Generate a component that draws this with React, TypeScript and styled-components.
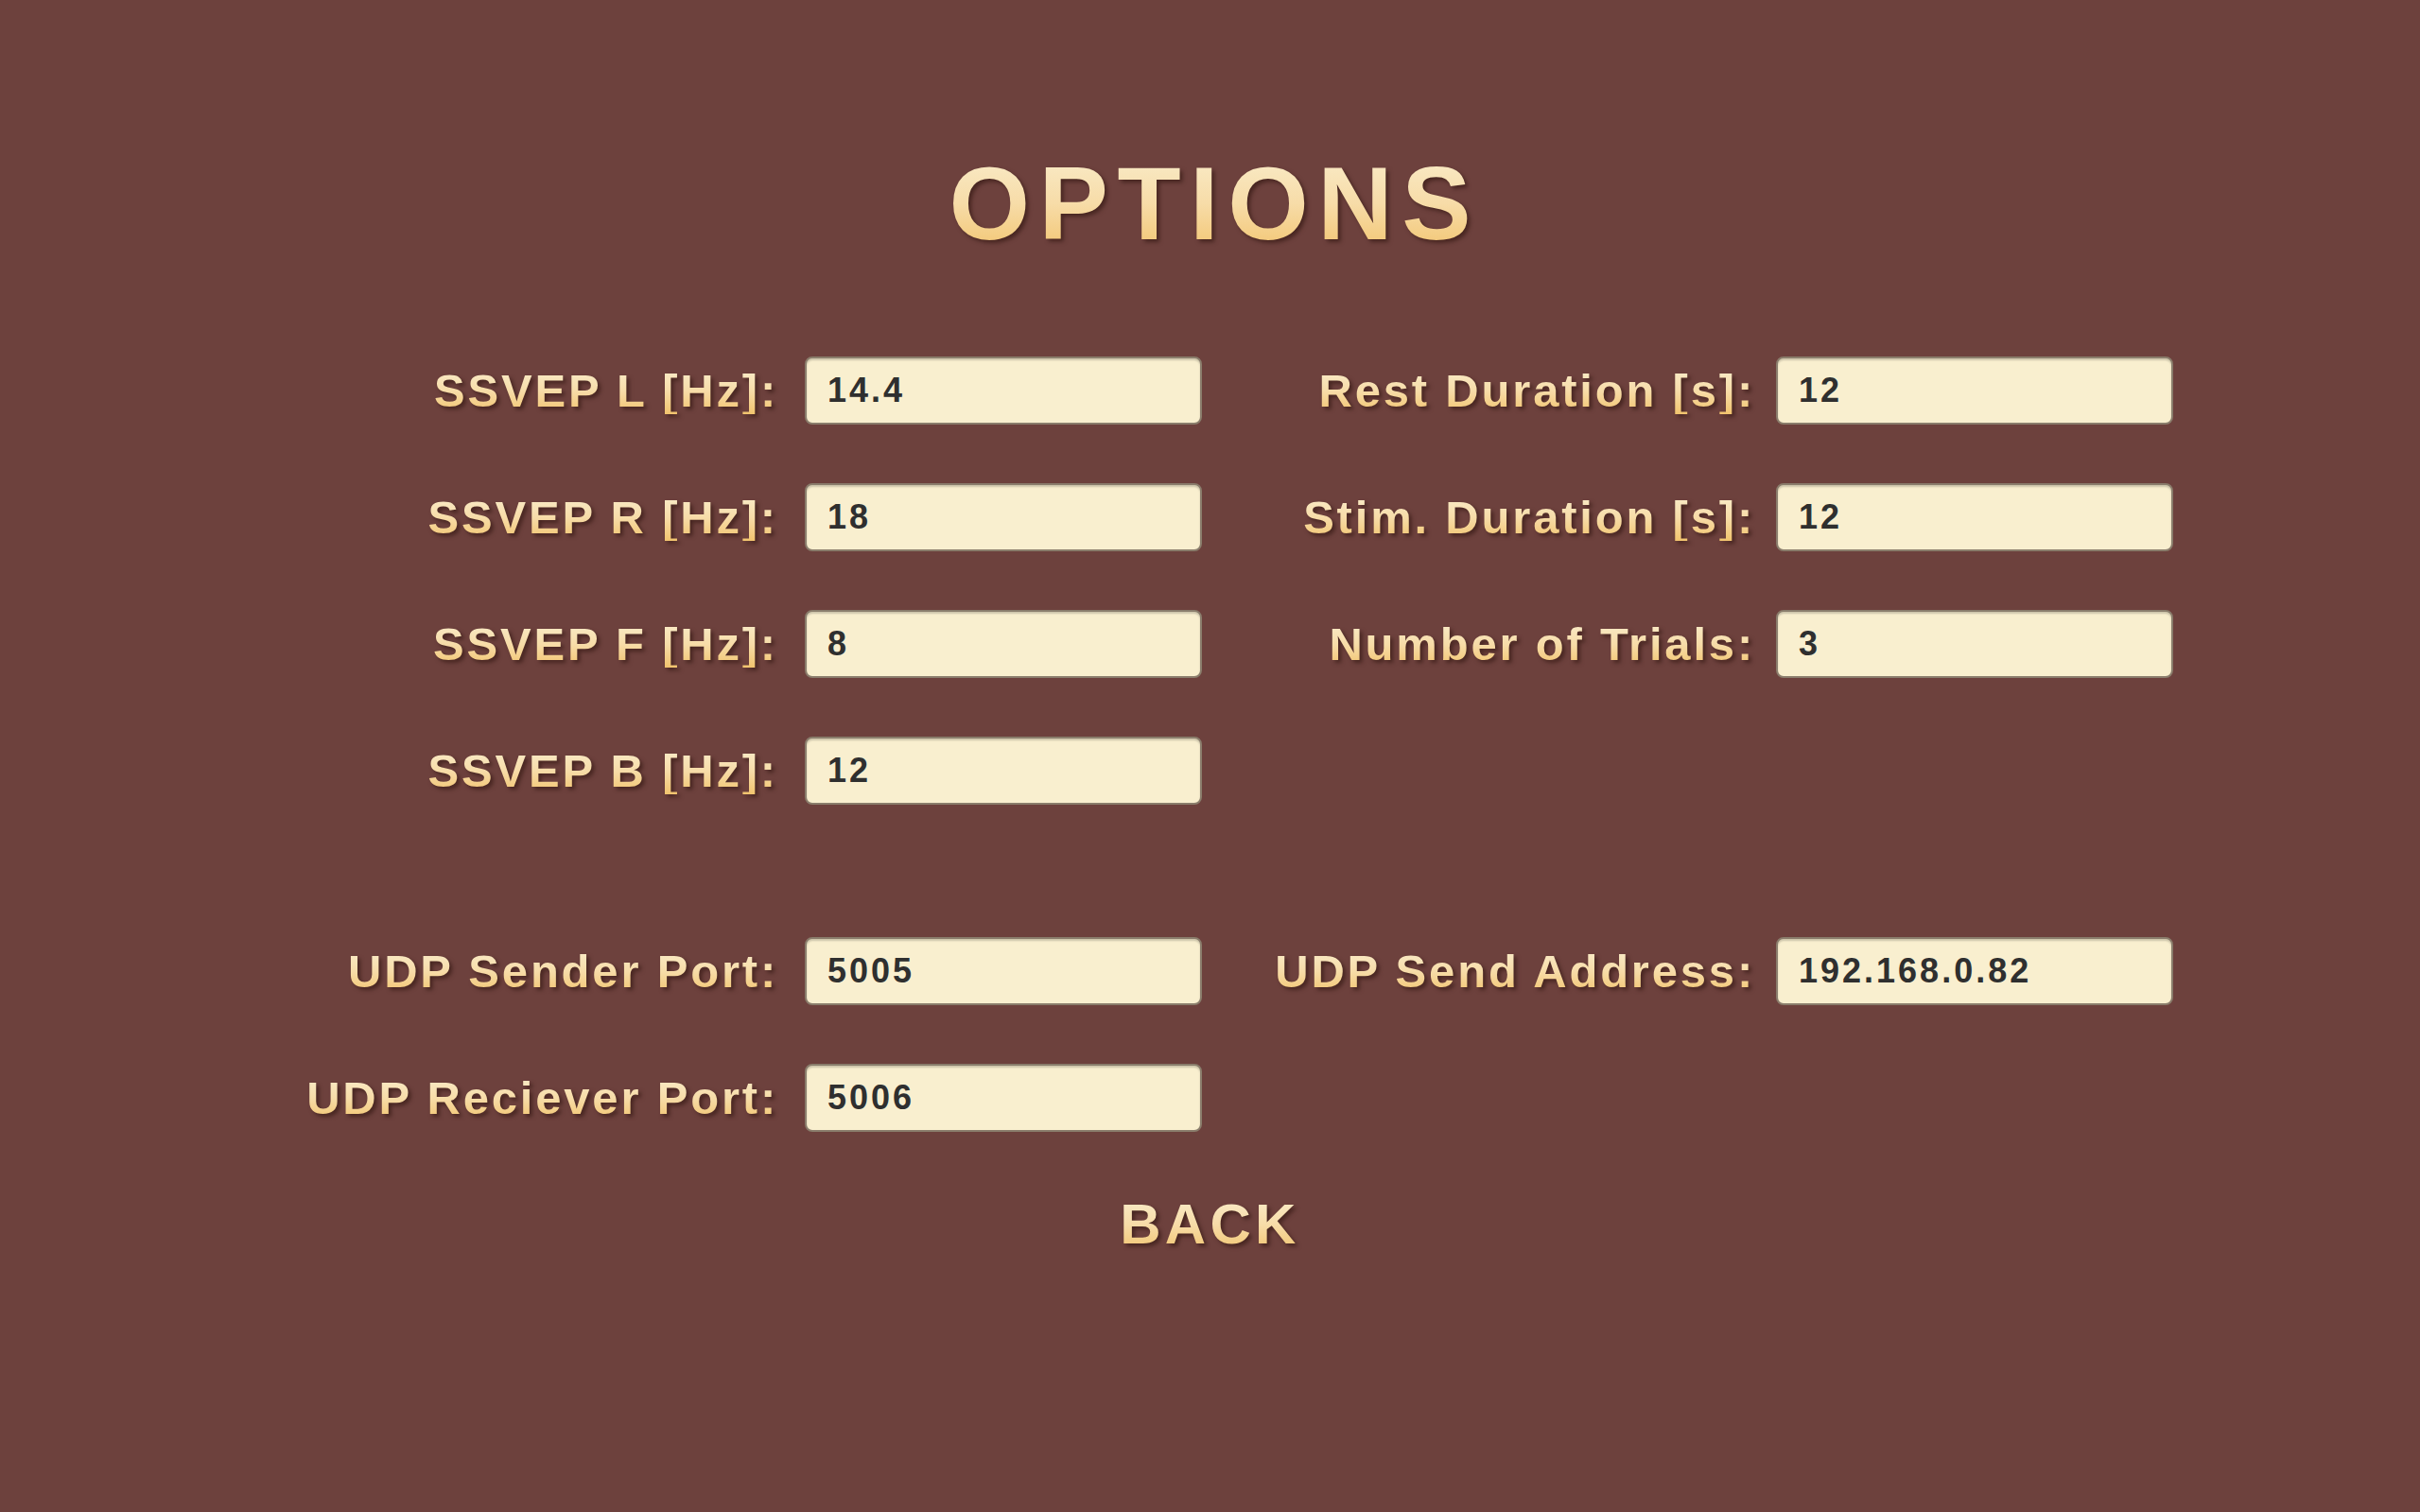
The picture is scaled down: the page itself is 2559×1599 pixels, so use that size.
import React from "react";
import styled, { createGlobalStyle, css } from "styled-components";

const GlobalStyle = createGlobalStyle`
  html, body {
    margin: 0;
    padding: 0;
    background: #6d413d;
  }
  body {
    font-family: "Liberation Sans", Arial, sans-serif;
    overflow: hidden;
  }
`;

const goldText = css`
  font-family: "Liberation Sans", Arial, sans-serif;
  font-weight: 700;
  line-height: 1;
  background: linear-gradient(180deg, #f9ecca 0%, #f7dca8 50%, #f2c46e 100%);
  -webkit-background-clip: text;
  background-clip: text;
  color: transparent;
  filter: drop-shadow(3px 3px 2px rgba(40, 15, 10, 0.55));
`;

const Page = styled.main`
  width: 100vw;
  height: 100vh;
  background: #6d413d;
  display: flex;
  flex-direction: column;
  align-items: center;
  padding-top: 160px;
  box-sizing: border-box;
`;

const Title = styled.h1`
  ${goldText};
  margin: 0;
  font-size: 110px;
  letter-spacing: 9.5px;
  padding-left: 9.5px;
`;

const Section = styled.section<{ $top: number }>`
  display: grid;
  grid-template-columns: 590px 420px 607px 420px;
  grid-auto-rows: 72px;
  row-gap: 62px;
  margin-top: ${(p) => p.$top}px;
`;

const Label = styled.label<{ $gap: number }>`
  ${goldText};
  align-self: center;
  justify-self: end;
  font-size: 49px;
  letter-spacing: 2.8px;
  padding-right: ${(p) => p.$gap}px;
  white-space: nowrap;
`;

const Field = styled.input`
  box-sizing: border-box;
  width: 420px;
  height: 72px;
  margin: 0;
  padding: 0 0 0 22px;
  border: 2px solid #8a7d6c;
  border-radius: 8px;
  background: #f9efcf;
  box-shadow: inset 0 2px 2px rgba(0, 0, 0, 0.18);
  font-family: "Liberation Sans", Arial, sans-serif;
  font-weight: 700;
  font-size: 36px;
  letter-spacing: 3px;
  color: #2f2f2f;
  outline: none;
`;

const Empty = styled.div``;

const BackButton = styled.button`
  ${goldText};
  border: none;
  padding: 0;
  margin-top: 68px;
  font-size: 60px;
  letter-spacing: 4.3px;
  cursor: pointer;
`;

type Cell = { label: string; value: string } | null;

const Pair = ({ cell, gap }: { cell: Cell; gap: number }) =>
  cell ? (
    <>
      <Label $gap={gap}>{cell.label}</Label>
      <Field defaultValue={cell.value} />
    </>
  ) : (
    <>
      <Empty />
      <Empty />
    </>
  );

const stimRows: [Cell, Cell][] = [
  [
    { label: "SSVEP L [Hz]:", value: "14.4" },
    { label: "Rest Duration [s]:", value: "12" },
  ],
  [
    { label: "SSVEP R [Hz]:", value: "18" },
    { label: "Stim. Duration [s]:", value: "12" },
  ],
  [
    { label: "SSVEP F [Hz]:", value: "8" },
    { label: "Number of Trials:", value: "3" },
  ],
  [{ label: "SSVEP B [Hz]:", value: "12" }, null],
];

const netRows: [Cell, Cell][] = [
  [
    { label: "UDP Sender Port:", value: "5005" },
    { label: "UDP Send Address:", value: "192.168.0.82" },
  ],
  [{ label: "UDP Reciever Port:", value: "5006" }, null],
];

const Rows = ({ rows }: { rows: [Cell, Cell][] }) => (
  <>
    {rows.map(([a, b], i) => (
      <React.Fragment key={i}>
        <Pair cell={a} gap={28} />
        <Pair cell={b} gap={22} />
      </React.Fragment>
    ))}
  </>
);

export default function App() {
  return (
    <>
      <GlobalStyle />
      <Page>
        <Title>OPTIONS</Title>
        <Section $top={107}>
          <Rows rows={stimRows} />
        </Section>
        <Section $top={140}>
          <Rows rows={netRows} />
        </Section>
        <BackButton>BACK</BackButton>
      </Page>
    </>
  );
}
